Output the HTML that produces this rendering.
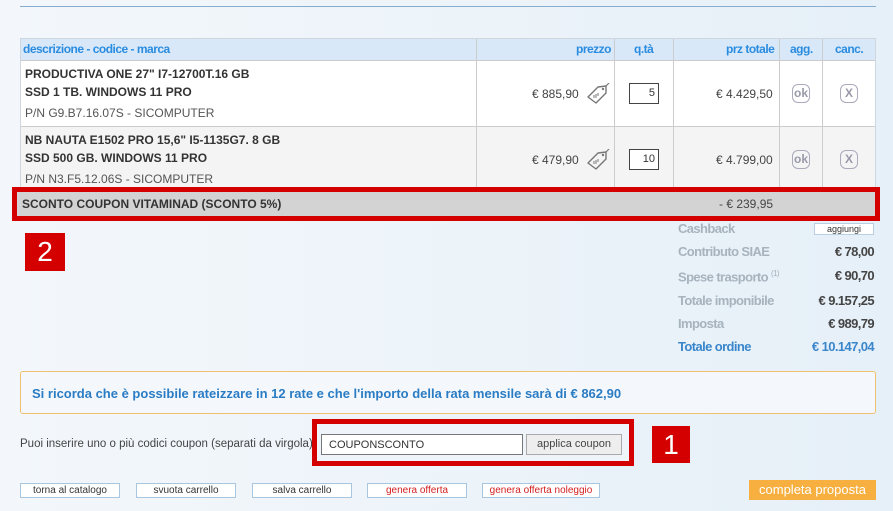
<!DOCTYPE html>
<html><head><meta charset="utf-8"><style>
*{margin:0;padding:0;box-sizing:border-box}
body{width:893px;height:511px;overflow:hidden;background:linear-gradient(90deg,#f3f7fb,#e6f0f8);font-family:"Liberation Sans",sans-serif;position:relative;font-size:12px;color:#333}
.a{position:absolute}
.hd{font-weight:bold;color:#2a8ce0;font-size:12px;letter-spacing:-0.5px}
.b{font-weight:bold;font-size:12px;color:#333}
.lbl{color:#a7b3bd;font-weight:bold;font-size:13px;letter-spacing:-0.6px}
.val{color:#444;font-weight:bold;font-size:13px;letter-spacing:-0.6px;text-align:right;width:120px;left:754px}
.btn{position:absolute;top:483px;height:15px;border:1px solid #a8c6e0;background:#fff;font-size:10px;text-align:center;line-height:13px;color:#333}
.ic{position:absolute;width:18px;height:19px;border:1.5px solid #aab;border-radius:6px;font-size:12px;color:#99a;text-align:center;line-height:16px;font-weight:bold}
</style></head><body>
<div class="a" style="left:20px;top:6px;width:856px;height:1px;background:#86acd0"></div>
<div class="a" style="left:20px;top:38px;width:856px;height:152px;border:1px solid #cfd6dc;background:#fff"></div>
<div class="a" style="left:21px;top:39px;width:854px;height:21px;background:#d8e8f8"></div>
<div class="a" style="left:21px;top:126px;width:854px;height:64px;background:#f4f4f4;border-top:1px solid #ccc"></div>
<div class="a" style="left:21px;top:60px;width:854px;height:1px;background:#ccc"></div>
<div class="a" style="left:476px;top:39px;width:1px;height:151px;background:#ccc"></div>
<div class="a" style="left:614px;top:39px;width:1px;height:151px;background:#ccc"></div>
<div class="a" style="left:673px;top:39px;width:1px;height:151px;background:#ccc"></div>
<div class="a" style="left:779px;top:39px;width:1px;height:151px;background:#ccc"></div>
<div class="a" style="left:822px;top:39px;width:1px;height:151px;background:#ccc"></div>
<div class="a hd" style="left:23px;top:42px">descrizione - codice - marca</div>
<div class="a hd" style="left:576px;top:42px">prezzo</div>
<div class="a hd" style="left:634px;top:42px">q.tà</div>
<div class="a hd" style="left:726px;top:42px">prz totale</div>
<div class="a hd" style="left:790px;top:42px">agg.</div>
<div class="a hd" style="left:835px;top:42px">canc.</div>
<div class="a b" style="left:25px;top:67px">PRODUCTIVA ONE 27" I7-12700T.16 GB</div>
<div class="a b" style="left:25px;top:85px">SSD 1 TB. WINDOWS 11 PRO</div>
<div class="a" style="left:25px;top:106px;color:#555">P/N G9.B7.16.07S - SICOMPUTER</div>
<div class="a b" style="left:25px;top:133px">NB NAUTA E1502 PRO 15,6" I5-1135G7. 8 GB</div>
<div class="a b" style="left:25px;top:151px">SSD 500 GB. WINDOWS 11 PRO</div>
<div class="a" style="left:25px;top:172px;color:#555">P/N N3.F5.12.06S - SICOMPUTER</div>
<div class="a" style="left:532px;top:87px;color:#444">€ 885,90</div>
<div class="a" style="left:532px;top:153px;color:#444">€ 479,90</div>
<svg class="a" style="left:586px;top:83px" width="24" height="22" viewBox="0 0 24 22"><path d="M2 14 L12 4 L20 3 L20 10 L10 20 Z" fill="none" stroke="#777" stroke-width="1.4" stroke-linejoin="round"/><circle cx="17" cy="6" r="1.2" fill="#777"/><path d="M20 3 L23 0" stroke="#777" stroke-width="1.2"/><path d="M8 12 v3 M10 11 v4 M12 10 v3" stroke="#777" stroke-width="1"/></svg>
<svg class="a" style="left:586px;top:149px" width="24" height="22" viewBox="0 0 24 22"><path d="M2 14 L12 4 L20 3 L20 10 L10 20 Z" fill="none" stroke="#777" stroke-width="1.4" stroke-linejoin="round"/><circle cx="17" cy="6" r="1.2" fill="#777"/><path d="M20 3 L23 0" stroke="#777" stroke-width="1.2"/><path d="M8 12 v3 M10 11 v4 M12 10 v3" stroke="#777" stroke-width="1"/></svg>
<div class="a" style="left:629px;top:83px;width:30px;height:21px;border:1px solid #444;background:#fff;text-align:right;padding:3px 3px;font-size:11px">5</div>
<div class="a" style="left:629px;top:149px;width:30px;height:21px;border:1px solid #444;background:#fff;text-align:right;padding:3px 3px;font-size:11px">10</div>
<div class="a" style="left:716px;top:87px;color:#444">€ 4.429,50</div>
<div class="a" style="left:716px;top:153px;color:#444">€ 4.799,00</div>
<div class="ic" style="left:792px;top:84px">ok</div>
<div class="ic" style="left:792px;top:150px">ok</div>
<div class="ic" style="left:840px;top:84px">X</div>
<div class="ic" style="left:840px;top:150px">X</div>
<div class="a" style="left:12px;top:187px;width:868px;height:34px;border:5px solid #d40000;background:#d3d3d3"></div>
<div class="a b" style="left:22px;top:197px">SCONTO COUPON VITAMINAD (SCONTO 5%)</div>
<div class="a" style="left:719px;top:197px;color:#444">- € 239,95</div>
<div class="a" style="left:25px;top:233px;width:40px;height:38px;background:#d40000;color:#fff;font-size:28px;text-align:center;line-height:38px">2</div>
<div class="a lbl" style="left:678px;top:221px">Cashback</div>
<div class="a" style="left:814px;top:223px;width:60px;height:12px;background:#fff;border:1px solid #b8cfe4;font-size:9px;text-align:center;line-height:10px">aggiungi</div>
<div class="a lbl" style="left:678px;top:244px">Contributo SIAE</div>
<div class="a val" style="top:244px">€ 78,00</div>
<div class="a lbl" style="left:678px;top:269px">Spese trasporto <sup style="font-size:8px;font-weight:normal">(1)</sup></div>
<div class="a val" style="top:268px">€ 90,70</div>
<div class="a lbl" style="left:678px;top:293px">Totale imponibile</div>
<div class="a val" style="top:293px">€ 9.157,25</div>
<div class="a lbl" style="left:678px;top:316px">Imposta</div>
<div class="a val" style="top:316px">€ 989,79</div>
<div class="a lbl" style="left:678px;top:339px;color:#3a86cc">Totale ordine</div>
<div class="a val" style="top:339px;color:#3a86cc">€ 10.147,04</div>
<div class="a" style="left:20px;top:371px;width:856px;height:43px;border:1px solid #f0c070;border-radius:3px;background:#f4f8fc"></div>
<div class="a" style="left:32px;top:386px;color:#2a7cc4;font-weight:bold;font-size:13px">Si ricorda che è possibile rateizzare in 12 rate e che l'importo della rata mensile sarà di € 862,90</div>
<div class="a" style="left:20px;top:438px;font-size:11.5px;color:#444">Puoi inserire uno o più codici coupon (separati da virgola)</div>
<div class="a" style="left:312px;top:419px;width:322px;height:47px;border:5px solid #d40000;background:#eef4f9"></div>
<div class="a" style="left:321px;top:434px;width:202px;height:21px;border:1px solid #777;background:#fff;font-size:11px;padding:4px 7px">COUPONSCONTO</div>
<div class="a" style="left:526px;top:434px;width:96px;height:21px;border:1px solid #aaa;background:#eee;font-size:11px;text-align:center;line-height:19px;color:#444">applica coupon</div>
<div class="a" style="left:652px;top:426px;width:38px;height:37px;background:#d40000;color:#fff;font-size:28px;text-align:center;line-height:37px">1</div>
<div class="btn" style="left:20px;width:100px">torna al catalogo</div>
<div class="btn" style="left:136px;width:100px">svuota carrello</div>
<div class="btn" style="left:252px;width:100px">salva carrello</div>
<div class="btn" style="left:367px;width:100px;color:#d42020">genera offerta</div>
<div class="btn" style="left:482px;width:118px;color:#d42020">genera offerta noleggio</div>
<div class="a" style="left:749px;top:480px;width:127px;height:20px;background:#f7b040;color:#fff;font-size:13px;text-align:center;line-height:20px">completa proposta</div>
</body></html>
